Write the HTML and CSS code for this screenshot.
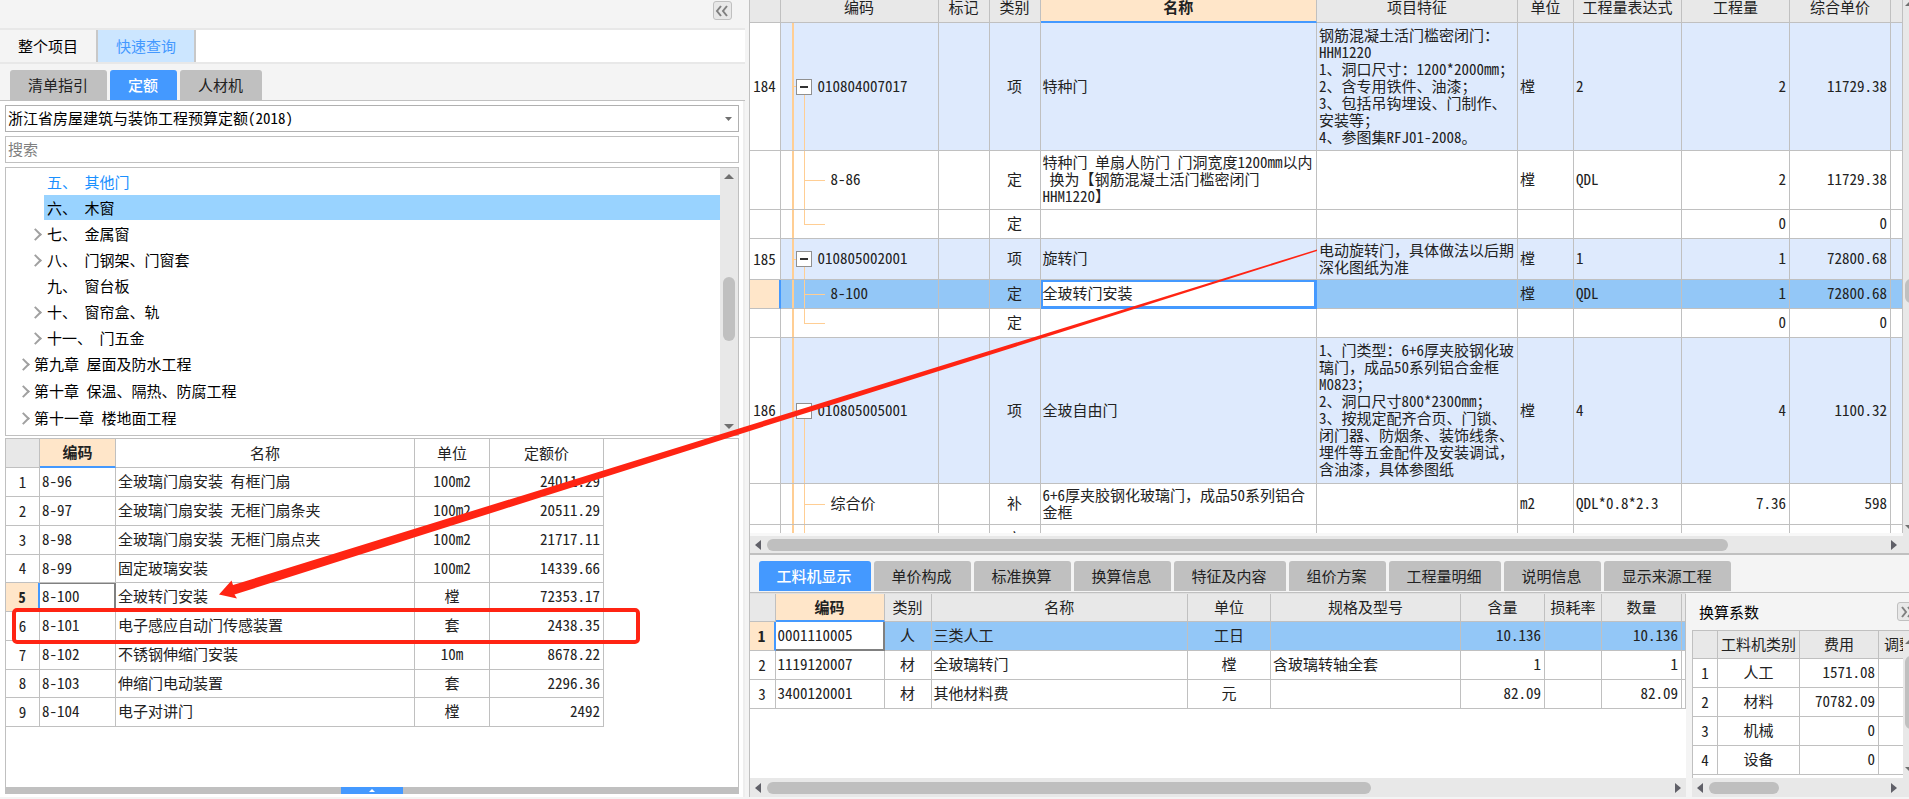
FILE: index.html
```html
<!DOCTYPE html>
<html lang="zh-CN">
<head>
<meta charset="utf-8">
<title>工程计价</title>
<link rel="stylesheet" href="styles.css">
</head>
<body>
<div class="app">
  <aside class="side">
    <div class="side-top">
      <button class="fold" type="button" aria-label="收起">
        <svg width="14" height="12" viewBox="0 0 14 12"><path d="M6 1 2 6l4 5M12 1 8 6l4 5"/></svg>
      </button>
    </div>
    <nav class="view-tabs">
      <button type="button">整个项目</button>
      <button type="button" class="on">快速查询</button>
    </nav>
    <nav class="tabs side-tabs">
      <button type="button">清单指引</button>
      <button type="button" class="on">定额</button>
      <button type="button">人材机</button>
    </nav>
    <div class="side-body">
      <div class="combo">
        <select aria-label="定额库"><option>浙江省房屋建筑与装饰工程预算定额(2018)</option></select>
        <svg width="7" height="4" viewBox="0 0 7 4"><path d="M0 0h7L3.500 4z"/></svg>
      </div>
      <input class="search" type="text" placeholder="搜索" aria-label="搜索">
      <div class="tree">
        <ul>
          <li class="l3 link"><span>五、 其他门</span></li>
          <li class="l3 sel"><span>六、 木窗</span></li>
          <li class="l3 more"><span>七、 金属窗</span></li>
          <li class="l3 more"><span>八、 门钢架、门窗套</span></li>
          <li class="l3"><span>九、 窗台板</span></li>
          <li class="l3 more"><span>十、 窗帘盒、轨</span></li>
          <li class="l3 more"><span>十一、 门五金</span></li>
          <li class="l2 more"><span>第九章 屋面及防水工程</span></li>
          <li class="l2 more"><span>第十章 保温、隔热、防腐工程</span></li>
          <li class="l2 more"><span>第十一章 楼地面工程</span></li>
        </ul>
        <div class="vbar">
          <i class="up"></i><b class="thumb-tree"></b><i class="down"></i>
        </div>
      </div>
      <div class="quota">
        <table class="grid quota-grid">
          <colgroup><col class="w34"><col class="w76"><col class="w299"><col class="w75"><col class="w114"></colgroup>
          <thead><tr><th class="corner"></th><th class="hot">编码</th><th>名称</th><th>单位</th><th>定额价</th></tr></thead>
          <tbody>
            <tr><th>1</th><td>8-96</td><td>全玻璃门扇安装 有框门扇</td><td class="c">100m2</td><td class="r">24011.29</td></tr>
            <tr><th>2</th><td>8-97</td><td>全玻璃门扇安装 无框门扇条夹</td><td class="c">100m2</td><td class="r">20511.29</td></tr>
            <tr><th>3</th><td>8-98</td><td>全玻璃门扇安装 无框门扇点夹</td><td class="c">100m2</td><td class="r">21717.11</td></tr>
            <tr><th>4</th><td>8-99</td><td>固定玻璃安装</td><td class="c">100m2</td><td class="r">14339.66</td></tr>
            <tr><th class="cur">5</th><td class="focus">8-100</td><td>全玻转门安装</td><td class="c">樘</td><td class="r">72353.17</td></tr>
            <tr><th>6</th><td>8-101</td><td>电子感应自动门传感装置</td><td class="c">套</td><td class="r">2438.35</td></tr>
            <tr><th>7</th><td>8-102</td><td>不锈钢伸缩门安装</td><td class="c">10m</td><td class="r">8678.22</td></tr>
            <tr><th>8</th><td>8-103</td><td>伸缩门电动装置</td><td class="c">套</td><td class="r">2296.36</td></tr>
            <tr><th>9</th><td>8-104</td><td>电子对讲门</td><td class="c">樘</td><td class="r">2492</td></tr>
          </tbody>
        </table>
      </div>
      <div class="drawer"><button type="button" aria-label="展开"></button></div>
    </div>
  </aside>

  <main class="main">
    <div class="bill">
      <div class="bill-scroll">
        <table class="grid bill-grid">
          <colgroup><col class="w31"><col class="w158"><col class="w51"><col class="w51"><col><col class="w201"><col class="w56"><col class="w108"><col class="w108"><col class="w101"><col class="w12"></colgroup>
          <thead><tr><th></th><th>编码</th><th>标记</th><th>类别</th><th class="hot">名称</th><th>项目特征</th><th>单位</th><th>工程量表达式</th><th>工程量</th><th>综合单价</th><th></th></tr></thead>
          <tbody>
            <tr class="item h128"><th>184</th><td class="node top"><span class="minus"></span>010804007017</td><td></td><td class="c">项</td><td>特种门</td><td>钢筋混凝土活门槛密闭门：<br>HHM1220<br>1、洞口尺寸：1200*2000mm；<br>2、含专用铁件、油漆；<br>3、包括吊钩埋设、门制作、<br>安装等；<br>4、参图集RFJ01-2008。</td><td>樘</td><td>2</td><td class="r">2</td><td class="r">11729.38</td><td></td></tr>
            <tr class="h59"><th></th><td class="node child">8-86</td><td></td><td class="c">定</td><td>特种门 单扇人防门 门洞宽度1200mm以内<br><span class="lead">换为【钢筋混凝土活门槛密闭门</span><br>HHM1220】</td><td></td><td>樘</td><td>QDL</td><td class="r">2</td><td class="r">11729.38</td><td></td></tr>
            <tr class="h29"><th></th><td class="node last"></td><td></td><td class="c">定</td><td></td><td></td><td></td><td></td><td class="r">0</td><td class="r">0</td><td></td></tr>
            <tr class="item h41"><th>185</th><td class="node top"><span class="minus"></span>010805002001</td><td></td><td class="c">项</td><td>旋转门</td><td>电动旋转门<span class="full">，</span>具体做法以后期<br>深化图纸为准</td><td>樘</td><td>1</td><td class="r">1</td><td class="r">72800.68</td><td></td></tr>
            <tr class="picked h29"><th class="cur"></th><td class="node child">8-100</td><td></td><td class="c">定</td><td class="edit">全玻转门安装</td><td></td><td>樘</td><td>QDL</td><td class="r">1</td><td class="r">72800.68</td><td></td></tr>
            <tr class="h29"><th></th><td class="node last"></td><td></td><td class="c">定</td><td></td><td></td><td></td><td></td><td class="r">0</td><td class="r">0</td><td></td></tr>
            <tr class="item h146"><th>186</th><td class="node top"><span class="minus"></span>010805005001</td><td></td><td class="c">项</td><td>全玻自由门</td><td>1、门类型：6+6厚夹胶钢化玻<br>璃门<span class="full">，</span>成品50系列铝合金框<br>M0823；<br>2、洞口尺寸800*2300mm；<br>3、按规定配齐合页、门锁、<br>闭门器、防烟条、装饰线条、<br>埋件等五金配件及安装调试<span class="full">，</span><br>含油漆<span class="full">，</span>具体参图纸</td><td>樘</td><td>4</td><td class="r">4</td><td class="r">1100.32</td><td></td></tr>
            <tr class="h41"><th></th><td class="node child">综合价</td><td></td><td class="c">补</td><td>6+6厚夹胶钢化玻璃门<span class="full">，</span>成品50系列铝合<br>金框</td><td></td><td>m2</td><td>QDL*0.8*2.3</td><td class="r">7.36</td><td class="r">598</td><td></td></tr>
            <tr class="h29"><th></th><td class="node last"></td><td></td><td class="c">定</td><td></td><td></td><td></td><td></td><td></td><td></td><td></td></tr>
          </tbody>
        </table>
      </div>
      <div class="edge"><i class="up"></i><b class="thumb-bill"></b><i class="down"></i></div>
      <div class="hbar"><i class="left"></i><span class="track"><b class="part-bill"></b></span><i class="right"></i></div>
    </div>

    <nav class="tabs detail-tabs">
      <button type="button" class="on">工料机显示</button>
      <button type="button">单价构成</button>
      <button type="button">标准换算</button>
      <button type="button">换算信息</button>
      <button type="button">特征及内容</button>
      <button type="button">组价方案</button>
      <button type="button">工程量明细</button>
      <button type="button">说明信息</button>
      <button type="button">显示来源工程</button>
    </nav>

    <div class="detail">
      <section class="res">
        <div class="res-scroll">
          <table class="grid res-grid">
            <colgroup><col class="w26"><col class="w109"><col class="w47"><col><col class="w83"><col class="w190"><col class="w84"><col class="w57"><col class="w80"><col class="w4"></colgroup>
            <thead><tr><th></th><th class="hot">编码</th><th>类别</th><th>名称</th><th>单位</th><th>规格及型号</th><th>含量</th><th>损耗率</th><th>数量</th><th></th></tr></thead>
            <tbody>
              <tr class="picked"><th class="cur">1</th><td class="focus">0001110005</td><td class="c">人</td><td>三类人工</td><td class="c">工日</td><td></td><td class="r">10.136</td><td></td><td class="r">10.136</td><td></td></tr>
              <tr><th>2</th><td>1119120007</td><td class="c">材</td><td>全玻璃转门</td><td class="c">樘</td><td>含玻璃转轴全套</td><td class="r">1</td><td></td><td class="r">1</td><td></td></tr>
              <tr><th>3</th><td>3400120001</td><td class="c">材</td><td>其他材料费</td><td class="c">元</td><td></td><td class="r">82.09</td><td></td><td class="r">82.09</td><td></td></tr>
            </tbody>
          </table>
        </div>
        <div class="hbar"><i class="left"></i><span class="track"><b class="part-res"></b></span><i class="right"></i></div>
      </section>
      <section class="factor">
        <header>
          <h2>换算系数</h2>
          <button class="fold" type="button" aria-label="展开">
            <svg width="14" height="12" viewBox="0 0 14 12"><path d="m2 1 4 5-4 5M8 1l4 5-4 5"/></svg>
          </button>
        </header>
        <div class="factor-row">
          <div class="factor-scroll">
            <table class="grid factor-grid">
              <colgroup><col class="w25"><col class="w82"><col class="w79"><col class="w60"></colgroup>
              <thead><tr><th></th><th>工料机类别</th><th>费用</th><th class="cut">调整系数</th></tr></thead>
              <tbody>
                <tr><th>1</th><td class="c">人工</td><td class="r">1571.08</td><td></td></tr>
                <tr><th>2</th><td class="c">材料</td><td class="r">70782.09</td><td></td></tr>
                <tr><th>3</th><td class="c">机械</td><td class="r">0</td><td></td></tr>
                <tr><th>4</th><td class="c">设备</td><td class="r">0</td><td></td></tr>
              </tbody>
            </table>
          </div>
          <div class="edge"><i class="up"></i><b class="thumb-factor"></b><i class="down"></i></div>
        </div>
        <div class="hbar"><i class="left"></i><span class="track"><b class="part-factor"></b></span><i class="right"></i></div>
      </section>
    </div>
  </main>
</div>
<svg class="arrow" width="1330" height="620" viewBox="0 0 1330 620" aria-hidden="true">
  <path d="M219 594.500 231.500 580.500 233 585 1317 249.500V251L234.500 594.500 237 598.500z"/>
</svg>
<div class="mark"></div>
</body>
</html>
```
FILE: styles.css
```css
* { box-sizing: border-box; }
body {
  margin: 0;
  height: 100vh;
  overflow: hidden;
  position: relative;
  background: #f4f4f4;
  color: #222;
  font: 15px/17px "Noto Sans CJK SC", sans-serif;
  font-feature-settings: "hwid" 1;
}
button, input, select {
  font: inherit;
  font-feature-settings: inherit;
  color: inherit;
  margin: 0;
}
button { border: 0; padding: 0; white-space: nowrap; }
.full { font-feature-settings: normal; }
.app {
  display: flex;
  height: 100vh;
  padding-bottom: 2px;
}

/* left panel */
.side {
  flex: 0 0 39%;
  min-width: 0;
  display: flex;
  flex-direction: column;
}
.side-top {
  height: 30px;
  padding: 1px 13px 0 0;
  border-bottom: 2px solid #e8e8e8;
  display: flex;
  justify-content: flex-end;
  align-items: flex-start;
}
.fold {
  width: 19px;
  height: 19px;
  flex: none;
  border: 1px solid #c0c0c0;
  border-radius: 3px;
  background: #e8e8e8;
  display: flex;
  align-items: center;
  justify-content: center;
}
.fold svg { fill: none; stroke: #808080; stroke-width: 2; }
.view-tabs {
  display: flex;
  height: 34px;
  background: #fff;
  border-bottom: 2px solid #e8e8e8;
}
.view-tabs button {
  padding: 0 18px 2px;
  background: #f4f4f4;
  border-right: 2px solid #c8c8c8;
  color: #000;
}
.view-tabs .on { background: #cce6ff; color: #4499ff; }
.tabs { display: flex; gap: 3px; }
.tabs button {
  height: 30px;
  padding: 0 19px 2px 18px;
  background: #c0c0c0;
  border-radius: 3px 3px 0 0;
}
.tabs .on { background: #4499ff; color: #fff; font-weight: 500; }
.side-tabs {
  height: 37px;
  padding: 6px 10px 0;
  border-bottom: 1px solid #c0c0c0;
}
.side-body {
  flex: 1;
  min-height: 0;
  display: flex;
  flex-direction: column;
  padding: 4px 4px 3px 5px;
  background: #fff;
  border-right: 2px solid #eee;
}
.combo { position: relative; margin-bottom: 4px; display: flex; }
.combo select, .search {
  width: 100%;
  height: 27px;
  padding: 0 2px 2px;
  border: 1px solid #b0b0b0;
  border-radius: 0;
  background: #fff;
  color: #000;
  appearance: none;
}
.combo svg { position: absolute; right: 7px; top: 12px; fill: #707070; }
.search { flex: none; border-color: #c0c0c0; }
.search::placeholder { color: #808080; opacity: 1; }
.tree {
  flex: none;
  display: flex;
  margin-top: 4px;
  border: 1px solid #c0c0c0;
}
.tree ul {
  flex: 1;
  margin: 0;
  padding: 1px 0 3px;
  list-style: none;
  color: #000;
}
.tree li { position: relative; height: 26px; line-height: 25px; padding-left: 25px; }
.tree .l2 { height: 27px; }
.tree .l3 { padding-left: 38px; }
.tree span { display: block; padding-left: 3px; }
.tree .sel span { background: #99d3ff; }
.tree .link { color: #1a90ff; }
.tree .more::before {
  content: "";
  position: absolute;
  left: 13px;
  top: 9px;
  width: 7px;
  height: 7px;
  border: solid #a0a0a0;
  border-width: 2px 2px 0 0;
  transform: rotate(45deg);
}
.tree .l3.more::before { left: 25px; }
.vbar {
  width: 18px;
  background: #e8e8e8;
  display: flex;
  flex-direction: column;
  align-items: center;
  padding: 6px 0;
}
.vbar .down { margin-top: auto; }
.thumb-tree { width: 12px; height: 64px; margin-top: 98px; border-radius: 6px; background: #c0c0c0; }
.up, .down { border: solid transparent; border-width: 0 5px; }
.up { border-bottom: 5px solid #707070; }
.down { border-top: 5px solid #707070; }
.quota {
  flex: 1;
  min-height: 0;
  margin-top: 2px;
  border: solid #c0c0c0;
  border-width: 1px 1px 0;
}
.drawer { height: 7px; flex: none; background: #c0c0c0; display: flex; justify-content: center; }
.drawer button { width: 62px; background: #4499ff; display: flex; justify-content: center; align-items: center; }
.drawer button::after { content: ""; border: solid transparent; border-width: 0 3px 3px; border-bottom-color: #fff; }

/* data grids */
.grid { border-collapse: separate; border-spacing: 0; table-layout: fixed; }
.grid th, .grid td {
  padding: 0 2px 3px;
  border: solid #c0c0c0;
  border-width: 0 1px 1px 0;
  font-weight: 400;
  text-align: left;
  white-space: nowrap;
  overflow: hidden;
}
.grid th { text-align: center; padding: 0 0 2px; }
.grid thead th { background: #e8e8e8; }
.grid thead .hot { background: #ffe6c9; border-bottom: 2px solid #4499ff; font-weight: 700; }
.grid .c { text-align: center; }
.grid .r { text-align: right; padding-right: 3px; }
.grid .cur { background: #ffe6c9; border-right: 2px solid #4499ff; font-weight: 700; }
.grid .picked td { background-color: #93c7f7; }
.grid tr .focus { background-color: #fff; border-right: 2px solid #808080; border-bottom: 2px solid #808080; }
.grid .picked .focus { background-color: #fff; }
.quota-grid .focus { box-shadow: inset 0 1px 0 #808080; }
.grid .picked .edit { background-color: #fff; box-shadow: inset 0 0 0 2px #4499ff; border-color: #4499ff; }
.quota-grid thead th { background: #fff; height: 29px; }
.quota-grid thead .corner { background: #e8e8e8; }
.quota-grid tbody tr { height: 29px; }
.quota-grid tbody tr:nth-child(4n) { height: 28px; }
.w4 { width: 4px; } .w12 { width: 12px; } .w25 { width: 25px; } .w26 { width: 26px; }
.w31 { width: 31px; } .w34 { width: 34px; } .w47 { width: 47px; } .w51 { width: 51px; }
.w56 { width: 56px; } .w57 { width: 57px; } .w60 { width: 60px; } .w75 { width: 75px; }
.w76 { width: 76px; } .w79 { width: 79px; } .w80 { width: 80px; } .w82 { width: 82px; }
.w83 { width: 83px; } .w84 { width: 84px; } .w101 { width: 101px; } .w108 { width: 108px; }
.w109 { width: 109px; } .w114 { width: 114px; } .w158 { width: 158px; } .w190 { width: 190px; }
.w201 { width: 201px; } .w299 { width: 299px; }
.quota-grid { width: 598px; }

/* bill of quantities */
.main {
  flex: 1;
  min-width: 0;
  margin-left: 4px;
  display: flex;
  flex-direction: column;
  border-left: 1px solid #c0c0c0;
}
.bill {
  flex: 1;
  min-height: 0;
  display: grid;
  grid-template-columns: 1fr 6px;
  grid-template-rows: minmax(0, 1fr) 17px;
  border-bottom: 2px solid #c0c0c0;
}
.bill-scroll { overflow: hidden; min-width: 0; background: #fff; border-bottom: 3px solid #f8f8f8; }
.bill-grid, .res-grid { width: 100%; }
.bill-grid thead th { height: 23px; line-height: 14px; padding-bottom: 8px; }
.bill-grid thead .hot { padding-bottom: 7px; }
.bill-grid .item td { background-color: #deeafd; }
.h29 { height: 29px; }
.h41 { height: 41px; }
.h59 { height: 59px; }
.h128 { height: 128px; }
.h146 { height: 146px; }
.lead { padding-left: 7px; }
.bill-grid .node {
  --line: linear-gradient(#ffce94, #ffce94);
  position: relative;
  padding-left: 50px;
  background-repeat: no-repeat;
}
.bill-grid .top {
  padding-left: 37px;
  background-image: var(--line), var(--line), var(--line);
  background-position: 11px 0, 11px 50%, 23px 100%;
  background-size: 2px 100%, 6px 1px, 1px 50%;
}
.bill-grid .child {
  background-image: var(--line), var(--line), var(--line);
  background-position: 11px 0, 23px 0, 23px 50%;
  background-size: 2px 100%, 1px 100%, 21px 1px;
}
.bill-grid .last {
  background-image: var(--line), var(--line), var(--line);
  background-position: 11px 0, 23px 0, 23px 50%;
  background-size: 2px 100%, 1px 50%, 21px 1px;
}
.minus {
  position: absolute;
  left: 15px;
  top: calc(50% - 8px);
  width: 16px;
  height: 16px;
  border: 1px solid #909090;
  background: linear-gradient(#333, #333) center / 8px 2px no-repeat #fff;
}
.edge {
  background: #e8e8e8;
  display: flex;
  flex-direction: column;
  overflow: hidden;
  padding: 1px 0 6px 2px;
}
.edge i, .edge b { flex: none; }
.edge .down { margin-top: auto; }
.edge .up, .edge .down { width: 10px; }
.thumb-bill, .thumb-factor { width: 12px; border-radius: 6px; background: #c0c0c0; }
.thumb-bill { height: 24px; margin-top: 273px; }
.thumb-factor { height: 73px; margin-top: 12px; }
.hbar {
  height: 19px;
  padding: 0 5px;
  background: #e8e8e8;
  display: flex;
  align-items: center;
  gap: 6px;
}
.bill .hbar { grid-column: 1 / -1; height: 17px; padding-right: 12px; }
.track { flex: 1; height: 12px; }
.track b { display: block; height: 12px; border-radius: 6px; background: #bfbfbf; }
.part-bill { width: 86%; }
.part-res { width: 67%; }
.part-factor { width: 40%; }
.left, .right { border: solid transparent; border-width: 5px 0; flex: none; }
.left { border-right: 6px solid #606068; }
.right { border-left: 6px solid #606068; }

/* detail area */
.detail-tabs { padding: 6px 9px 1px; flex: none; }
.detail { display: flex; height: 205px; border-top: 1px solid #c0c0c0; }
.res {
  flex: 1;
  min-width: 0;
  display: flex;
  flex-direction: column;
  background: #fff;
  border-top: 1px solid #e0e0e0;
}
.res-scroll { flex: 1; min-height: 0; overflow: hidden; }
.res-grid tr { height: 29px; }
.res-grid thead tr { height: 28px; }
.factor {
  flex: 0 0 223px;
  min-width: 0;
  display: flex;
  flex-direction: column;
  padding-left: 6px;
}
.factor header { display: flex; justify-content: space-between; align-items: center; height: 37px; padding: 0 0 0 7px; overflow: hidden; }
.factor header .fold { margin-right: -7px; }
.factor h2 { margin: 0; font-size: 15px; font-weight: 400; color: #000; }
.factor-row { flex: 1; min-height: 0; display: flex; border: solid #c0c0c0; border-width: 1px 0 0 1px; background: #fff; }
.factor-scroll { flex: 1; min-width: 0; overflow: hidden; }
.factor-row .edge { flex: 0 0 6px; padding-top: 8px; }
.factor-grid { width: 246px; }
.factor-grid tr { height: 29px; }
.factor-grid thead tr { height: 28px; }
.factor-grid thead .cut { text-align: left; padding-left: 5px; }
.factor .hbar { padding-right: 12px; }

/* annotations */
.arrow { position: absolute; left: 0; top: 0; fill: #ff2413; pointer-events: none; }
.mark {
  position: absolute;
  left: 12px;
  top: 608px;
  width: 628px;
  height: 36px;
  border: 4px solid #ff2413;
  border-radius: 5px;
  pointer-events: none;
}
```
